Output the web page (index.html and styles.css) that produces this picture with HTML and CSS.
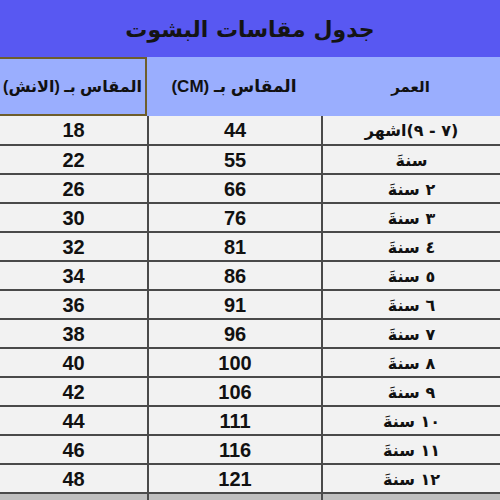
FILE: index.html
```html
<!DOCTYPE html>
<html lang="ar">
<head>
<meta charset="utf-8">
<link rel="stylesheet" href="styles.css">
</head>
<body>
<div class="sheet" dir="rtl">
  <div class="title">جدول مقاسات البشوت</div>
  <div class="grid">
    <div class="hd age">العمر</div>
    <div class="hd cm">المقاس بـ (CM)</div>
    <div class="hd inch">المقاس بـ (الانش)</div>

    <div class="c age">(٧ - ٩)اشهر</div><div class="c num mid">44</div><div class="c num">18</div>
    <div class="c age">سنةَ</div><div class="c num mid">55</div><div class="c num">22</div>
    <div class="c age">٢ سنةَ</div><div class="c num mid">66</div><div class="c num">26</div>
    <div class="c age">٣ سنةَ</div><div class="c num mid">76</div><div class="c num">30</div>
    <div class="c age">٤ سنةَ</div><div class="c num mid">81</div><div class="c num">32</div>
    <div class="c age">٥ سنةَ</div><div class="c num mid">86</div><div class="c num">34</div>
    <div class="c age">٦ سنةَ</div><div class="c num mid">91</div><div class="c num">36</div>
    <div class="c age">٧ سنةَ</div><div class="c num mid">96</div><div class="c num">38</div>
    <div class="c age">٨ سنةَ</div><div class="c num mid">100</div><div class="c num">40</div>
    <div class="c age">٩ سنةَ</div><div class="c num mid">106</div><div class="c num">42</div>
    <div class="c age">١٠ سنةَ</div><div class="c num mid">111</div><div class="c num">44</div>
    <div class="c age">١١ سنةَ</div><div class="c num mid">116</div><div class="c num">46</div>
    <div class="c age">١٢ سنةَ</div><div class="c num mid">121</div><div class="c num">48</div>
    <div class="c age grey">١٣ سنةَ</div><div class="c num mid grey">127</div><div class="c num grey">50</div>
  </div>
</div>
</body>
</html>
```

FILE: styles.css
```css
html, body {
  margin: 0;
  padding: 0;
  background: #f2f2f2;
  overflow: hidden;
}
.sheet {
  width: 500px;
  font-family: "Liberation Sans", "DejaVu Sans", sans-serif;
  font-weight: bold;
  color: #111;
}
.title {
  height: 57px;
  background: #5858f2;
  display: flex;
  align-items: center;
  justify-content: center;
  font-size: 22px;
  font-family: "DejaVu Sans", sans-serif;
  color: #141414;
  padding-top: 2px;
  box-sizing: border-box;
}
.grid {
  display: grid;
  grid-template-columns: 179px 174px 147px;
  grid-template-rows: 59px 30px;
  grid-auto-rows: 29px;
}
.hd {
  background: #9aaefe;
  display: flex;
  align-items: center;
  justify-content: center;
  font-size: 15px;
  white-space: nowrap;
  box-sizing: border-box;
  font-family: "Liberation Sans", "DejaVu Sans", sans-serif;
}
.hd.cm {
  font-size: 17px;
}
.hd.inch {
  font-size: 16px;
  border: 2px solid #6e5e2c;
  border-left: none;
  overflow: hidden;
}
.c {
  display: flex;
  align-items: center;
  justify-content: center;
  box-sizing: border-box;
  border-bottom: 2px solid #4a4a4a;
  background: #f2f2f2;
  font-size: 20px;
  padding-top: 1px;
}
.c.age {
  border-left: 2px solid #4a4a4a;
  font-family: "DejaVu Sans", sans-serif;
  font-size: 16px;
}
.c.mid {
  border-left: 2px solid #4a4a4a;
}
.c.grey {
  background: #bfbfbf;
}
```
